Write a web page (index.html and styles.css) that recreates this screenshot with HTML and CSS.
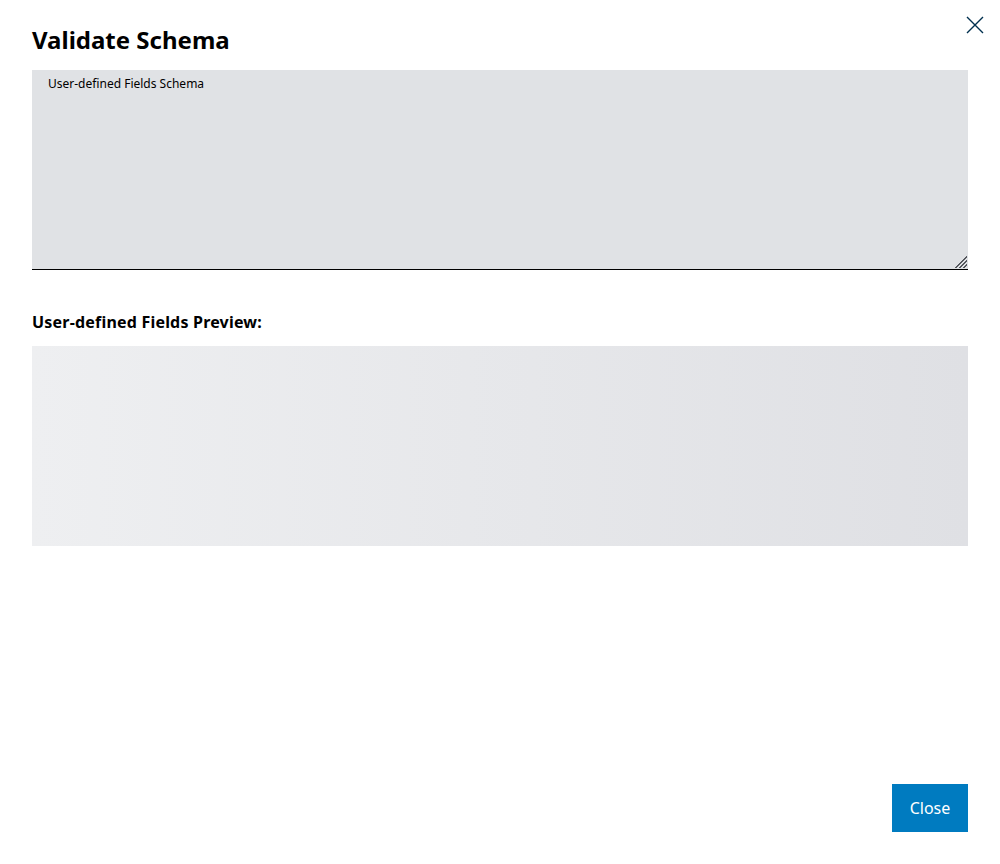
FILE: index.html
```html
<!DOCTYPE html>
<html>
<head>
<meta charset="utf-8">
<link rel="stylesheet" href="styles.css">
</head>
<body>
<div class="dialog">
  <button class="close-x" aria-label="Close">
    <svg width="18" height="18" viewBox="0 0 18 18"><path d="M1 1L17 17M17 1L1 17" stroke="#00304f" stroke-width="1.4" fill="none"/></svg>
  </button>
  <h1 class="title">Validate Schema</h1>
  <div class="field">
    <label class="field-label">User-defined Fields Schema</label>
    <textarea class="field-input"></textarea>
    <span class="grip"></span>
  </div>
  <h2 class="preview-title">User-defined Fields Preview:</h2>
  <div class="preview"></div>
  <div class="spacer"></div>
  <div class="footer">
    <button class="btn-primary">Close</button>
  </div>
</div>
</body>
</html>
```
FILE: styles.css
```css
* { box-sizing: border-box; }
html, body { margin: 0; padding: 0; background: #fff; }
body { font-family: "Noto Sans", "Open Sans", sans-serif; color: #000; }
.dialog {
  position: relative;
  width: 1000px;
  height: 864px;
  padding: 24px 32px 32px 32px;
  display: flex;
  flex-direction: column;
}
.close-x {
  position: absolute;
  top: 15px;
  right: 15px;
  width: 20px;
  height: 20px;
  padding: 0;
  border: 0;
  background: transparent;
  display: flex;
  align-items: center;
  justify-content: center;
}
.title {
  margin: 0;
  font-size: 24px;
  font-weight: 700;
  line-height: 32px;
  height: 32px;
}
.field {
  position: relative;
  margin-top: 14px;
  height: 200px;
  background: #e0e2e5;
  border-bottom: 1px solid #000;
  display: flex;
  flex-direction: column;
}
.field-label {
  font-size: 12px;
  line-height: 16px;
  padding: 6px 16px 0 16px;
}
.field-input {
  flex: 1;
  border: 0;
  background: transparent;
  resize: none;
  outline: none;
  font: inherit;
}
.grip {
  position: absolute;
  right: 1px;
  bottom: 1px;
  width: 14px;
  height: 14px;
  clip-path: polygon(100% 0, 100% 100%, 0 100%);
  background: repeating-linear-gradient(-45deg, #e0e2e5 0 1.6px, #55585e 1.6px 2.9px);
}
.preview-title {
  margin: 40px 0 0 0;
  font-size: 16px;
  font-weight: 700;
  line-height: 24px;
  letter-spacing: 0.2px;
}
.preview {
  margin-top: 12px;
  height: 200px;
  background: linear-gradient(to right, #eeeff1, #dfe0e4);
}
.spacer { flex: 1; }
.footer {
  display: flex;
  justify-content: flex-end;
}
.btn-primary {
  height: 48px;
  padding: 0 16px;
  min-width: 76px;
  border: 0;
  background: #007bc0;
  color: #fff;
  font-family: inherit;
  font-size: 16px;
}
```
